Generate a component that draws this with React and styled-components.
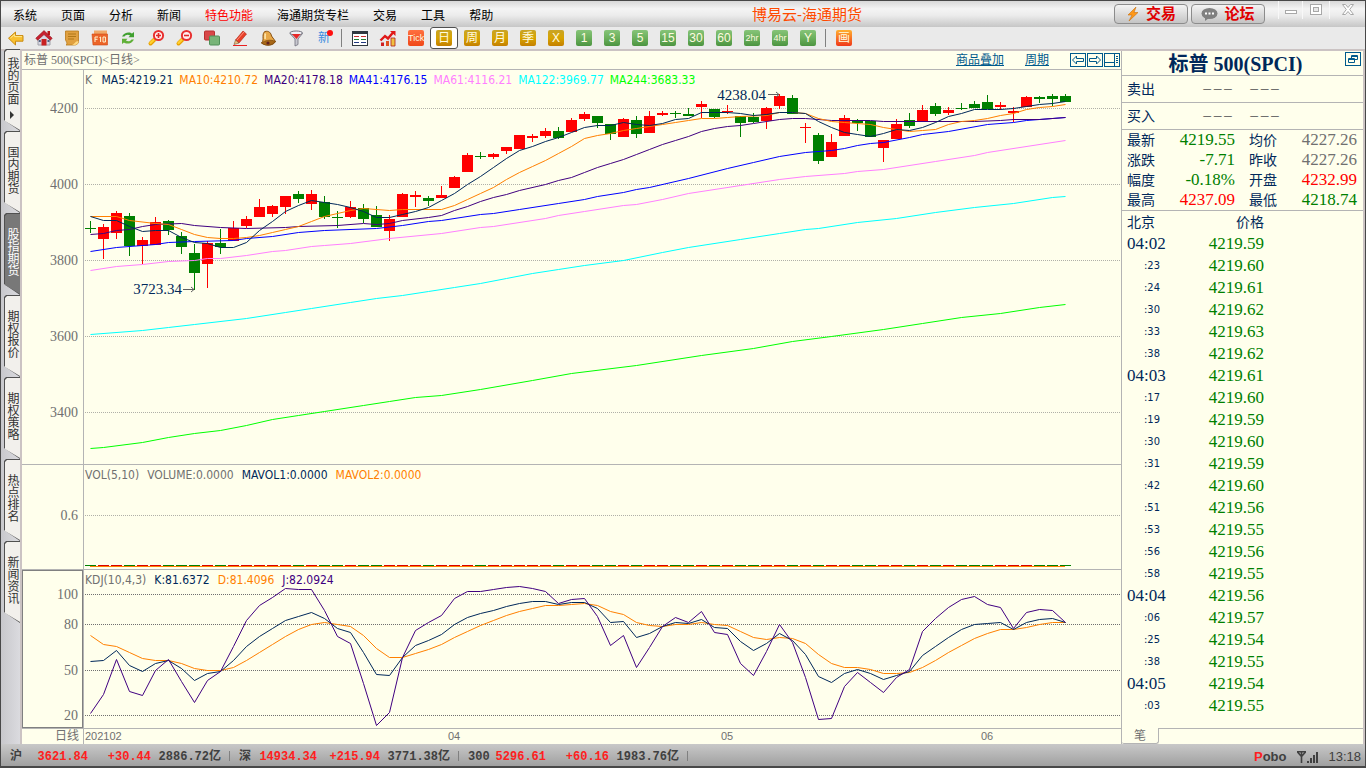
import React from 'react';
import styled, { createGlobalStyle } from 'styled-components';

const SERIF = '"Liberation Serif", "Noto Sans CJK SC", serif';
const SANS = '"DejaVu Sans Condensed", "Noto Sans CJK SC", sans-serif';
const ARIAL = '"Liberation Sans", "Noto Sans CJK SC", sans-serif';
const MONO = '"Liberation Mono", "Noto Sans CJK SC", monospace';

const NAVY = '#00285a';
const GREEN = '#008000';
const RED = '#ff0000';
const ORANGE = '#ff8000';
const PURPLE = '#400080';
const GRAY = '#707070';
const LINE = '#b4b4b4';

const GlobalStyle = createGlobalStyle`
  * {
    box-sizing: border-box;
  }

  body {
    margin: 0;
    background: #ffffec;
    font-family: ${SERIF};
    font-size: 12px;
  }

  button {
    margin: 0;
    padding: 0;
    border: 0;
    background: none;
    font: inherit;
    color: inherit;
    cursor: pointer;
  }

  svg {
    display: block;
    flex: none;
  }
`;

/* ---------- frame ---------- */

const Window = styled.div`
  display: flex;
  flex-direction: column;
  min-height: 100vh;
  border: 1px solid #484848;
  border-bottom-width: 2px;
`;

const MenuBar = styled.header`
  display: flex;
  height: 26px;
  background: linear-gradient(#d8d8d8, #f4f4f4 30%, #ececec 55%, #c6c6c6);
`;

const Menu = styled.nav`
  display: flex;
`;

const MenuItem = styled.button`
  padding: 0 12px;
  font-family: ${ARIAL};
  color: ${(p) => (p.$hot ? RED : '#000')};
  white-space: nowrap;
`;

const AppTitle = styled.h1`
  flex: 1;
  margin: 0;
  padding-right: 5px;
  font: 15px/28px ${ARIAL};
  color: #ff4a00;
  text-align: center;
  white-space: nowrap;
`;

const TitleButtons = styled.div`
  display: flex;
  gap: 3px;
  padding: 3px 13px 0 0;
`;

const TitleButton = styled.button`
  display: flex;
  align-items: center;
  justify-content: center;
  gap: 6px;
  width: 74px;
  height: 20px;
  border: 1px solid #8c8c8c;
  border-radius: 4px;
  background: linear-gradient(#f4f4f4, #dcdcdc 50%, #c4c4c4);
  font: bold 15px/18px ${ARIAL};
  color: #e00000;
`;

const WindowButton = styled.button`
  display: flex;
  justify-content: center;
  width: ${(p) => p.$w}px;
  height: 18px;
  padding-top: 3px;
  border-left: 1px solid #f8f8f8;
`;

const Toolbar = styled.div`
  display: flex;
  height: 24px;
  padding: 0 1px;
  border-bottom: 2px solid #cbc3c3;
  background: #eaeaea;
`;

const Tool = styled.button`
  display: flex;
  align-items: center;
  justify-content: center;
  width: 28px;
  height: 22px;
  border: 1px solid ${(p) => (p.$active ? '#505050' : 'transparent')};
  border-radius: 3px;
  background: ${(p) => (p.$active ? '#fff' : 'none')};
`;

const ToolDivider = styled.span`
  width: 1px;
  height: 18px;
  margin: 2px 4px 2px 3px;
  background: #808080;
`;

const tileFills = {
  gold: 'linear-gradient(#c8a428, #d8a400 50%, #c48000)',
  green: 'linear-gradient(#86c478, #6cb05c 50%, #4c9440)',
  red: 'linear-gradient(#ff7040, #f04818)',
  orange: 'linear-gradient(#ffb030, #f03818)',
};

const Tile = styled.span`
  width: 16px;
  height: 16px;
  border-radius: 2px;
  background: ${(p) => tileFills[p.$tone]};
  font: ${(p) => (p.$small ? 9 : 12)}px/16px ${ARIAL};
  color: #fffbe0;
  text-align: center;
`;

const NewBadge = styled.span`
  position: relative;
  font: 12px/16px ${ARIAL};
  color: #3c8ce0;

  &::after {
    content: '';
    position: absolute;
    top: 0;
    right: -3px;
    width: 6px;
    height: 6px;
    border-radius: 3px;
    background: #ff1010;
  }
`;

const Body = styled.div`
  display: flex;
  flex: 1;
  background: linear-gradient(90deg, #c8c8cc, #dcdce0 20px);
`;

/* ---------- side tabs ---------- */

const SideTabs = styled.nav`
  width: 19px;
  padding-left: 3px;
  /* the first tab starts level with the toolbar's rule */
  margin-top: -2px;
`;

const SideTab = styled.button`
  position: relative;
  z-index: 0;
  display: flex;
  flex-direction: column;
  align-items: center;
  justify-content: center;
  gap: 6px;
  width: 16px;
  height: 82px;
  padding-bottom: 4px;
  color: ${(p) => (p.$active ? '#fff' : '#333')};

  &::before,
  &::after {
    content: '';
    position: absolute;
    z-index: -1;
    inset: 0;
    clip-path: polygon(0 2px, 2px 0, 100% 0, 100% 100%, 0 71px);
    background: #505050;
  }

  &::after {
    inset: 1px 0 1px 1px;
    background: ${(p) => (p.$active ? '#787878' : '#f2f0ec')};
  }
`;

const SideLabel = styled.span`
  writing-mode: vertical-rl;
  font: 12px/14px ${ARIAL};
`;

/* ---------- chart ---------- */

const Panel = styled.main`
  display: flex;
  flex: 1;
  min-width: 0;
  border: 2px solid #cbc3c3;
  border-width: 0 2px;
  background: #ffffec;
`;

const ChartSide = styled.section`
  flex: 1;
  min-width: 0;
`;

const ChartHeader = styled.div`
  display: flex;
  align-items: center;
  height: 19px;
  padding: 0 1px 0 2px;
  border-bottom: 1px solid ${LINE};
  color: ${GRAY};
`;

const ChartName = styled.h2`
  flex: 1;
  margin: 0;
  font: 12px/18px ${SERIF};
`;

const HeaderLink = styled.a`
  margin-right: 21px;
  font: 12px/18px ${ARIAL};
  color: #005a8c;
`;

const IconRow = styled.div`
  display: flex;
  gap: 1px;
`;

const Pane = styled.div`
  display: grid;
  grid-template-columns: 61px minmax(0, 1fr);
  border-bottom: 1px solid ${LINE};
`;

const Axis = styled.div`
  outline: ${(p) => (p.$selected ? '1px solid #808080' : 'none')};
  outline-offset: -1px;
`;

const Plot = styled.div`
  position: relative;
  border-left: 1px solid ${LINE};
`;

const Legend = styled.div`
  position: absolute;
  top: 2px;
  left: 1px;
  display: flex;
  gap: ${(p) => p.$gap}px;
  font: 12px/16px ${SANS};
  white-space: nowrap;
`;

const LegendItem = styled.span`
  color: ${(p) => p.$color};
`;

const TimeAxis = styled.div`
  display: grid;
  grid-template-columns: 62px 363px 273px 260px 1fr;
  height: 15px;
  font: 11px/15px ${ARIAL};
  color: ${GRAY};
`;

const TimeLabel = styled.span`
  padding: ${(p) => (p.$first ? '0 4px 0 0' : '0 0 0 1px')};
  border-right: ${(p) => (p.$first ? `1px solid ${LINE}` : 'none')};
  font-size: ${(p) => (p.$first ? 12 : 11)}px;
  text-align: ${(p) => (p.$first ? 'right' : 'left')};
`;

/* ---------- quote panel ---------- */

const QuoteSide = styled.aside`
  display: flex;
  flex-direction: column;
  width: 242px;
  border-left: 1px solid ${LINE};
`;

const QuoteTitle = styled.div`
  display: flex;
  justify-content: center;
  position: relative;
  height: 25px;
  border-bottom: 1px solid ${LINE};
`;

const QuoteName = styled.h2`
  margin: 0 14px 0 0;
  font: bold 20px/26px ${SERIF};
  color: ${NAVY};
`;

const PopOut = styled.button`
  position: absolute;
  top: 1px;
  right: 2px;
`;

const BidRow = styled.div`
  display: flex;
  gap: 14px;
  height: 27px;
  padding-left: 5px;
  border-bottom: 1px solid ${LINE};
  font: 14px/26px ${ARIAL};
  color: ${NAVY};
`;

const BidLabel = styled.span`
  width: 61px;
`;

const Dashes = styled.span`
  width: 33px;
  font: 300 16px/30px Roboto, sans-serif;
  color: #606060;
`;

const StatTable = styled.table`
  width: 100%;
  border-collapse: separate;
  border-spacing: 0;
  border-bottom: 1px solid ${LINE};
  table-layout: fixed;
`;

const StatLabel = styled.th`
  width: ${(p) => p.$w}px;
  height: 20px;
  padding: 0 0 0 ${(p) => p.$pad}px;
  font: 14px/20px ${ARIAL};
  color: ${NAVY};
  text-align: left;
`;

const StatValue = styled.td`
  width: ${(p) => p.$w}px;
  padding: 0 ${(p) => p.$pad}px 0 0;
  font: 17px/20px ${SERIF};
  color: ${(p) => p.$color};
  text-align: right;
`;

const TickTable = styled.table`
  width: 142px;
  border-collapse: collapse;
  color: ${NAVY};
`;

const TickHead = styled.th`
  height: 22px;
  padding: 0 0 0 5px;
  font: 14px/22px ${ARIAL};
  text-align: ${(p) => p.$align};
`;

const TickTime = styled.td`
  height: 22px;
  padding: 0 0 0 ${(p) => (p.$minor ? 22 : 5)}px;
  font: ${(p) => (p.$minor ? `11px/22px ${SANS}` : `17px/22px ${SERIF}`)};
`;

const TickPrice = styled.td`
  padding: 0;
  font: 17px/22px ${SERIF};
  color: ${GREEN};
  text-align: right;
`;

const QuoteTabs = styled.div`
  display: flex;
  height: 16px;
  margin-top: auto;
`;

const QuoteTab = styled.button`
  width: 37px;
  border-bottom: 1px solid ${LINE};
  border-right: 1px solid ${LINE};
  border-radius: 0 0 3px 2px;
  font: 12px/14px ${ARIAL};
  color: ${GRAY};
`;

const QuoteTabsRest = styled.span`
  flex: 1;
  border-top: 1px solid ${LINE};
`;

/* ---------- status bar ---------- */

const StatusBar = styled.footer`
  display: flex;
  align-items: center;
  height: 22px;
  padding: 4px 4px 0 9px;
  background: linear-gradient(#c8c8c8, #a0a0a0);
  font: bold 12px/18px ${MONO};
  color: #404040;
`;

const IndexGroup = styled.div`
  display: grid;
  grid-template-columns: 18px 60px 63px 70px 18px;
  white-space: nowrap;
`;

const IndexCell = styled.span`
  color: ${(p) => (p.$up ? '#ff2020' : 'inherit')};
  text-align: ${(p) => (p.$left ? 'left' : 'right')};
`;

const StatusRule = styled.span`
  width: 1px;
  height: 10px;
  margin: 3px 8px;
  background: #808080;
`;

const StatusRight = styled.div`
  display: flex;
  align-items: center;
  gap: 10px;
  margin-left: auto;
  font: 13px/18px ${ARIAL};
`;

const Brand = styled.b`
  &::first-letter {
    color: #ff2020;
  }
`;

/* ---------- data ---------- */

// [rising, body top, body bottom, high, low], as y in window pixels
const candles = [
  [0, 228, 229, 221, 233], [1, 227, 239, 224, 259], [1, 213, 233, 211, 239], [0, 216, 246, 213, 256],
  [1, 240, 246, 237, 264], [1, 222, 245, 217, 245], [0, 221, 230, 220, 235], [0, 236, 247, 232, 254],
  [0, 253, 273, 244, 290], [1, 243, 264, 241, 288], [0, 243, 247, 229, 254], [1, 228, 241, 221, 241],
  [1, 219, 226, 216, 228], [1, 207, 217, 199, 217], [1, 206, 214, 205, 217], [1, 196, 207, 196, 214],
  [0, 194, 199, 191, 203], [1, 194, 204, 190, 210], [0, 202, 217, 196, 219], [0, 217, 218, 211, 228],
  [1, 207, 217, 201, 218], [0, 208, 219, 204, 223], [0, 215, 227, 206, 227], [1, 219, 231, 215, 241],
  [1, 194, 217, 193, 217], [1, 195, 197, 191, 207], [0, 198, 201, 196, 206], [1, 195, 198, 186, 198],
  [1, 177, 188, 176, 188], [1, 155, 172, 153, 172], [0, 156, 157, 152, 159], [1, 154, 157, 153, 159],
  [1, 147, 151, 147, 154], [1, 135, 149, 135, 149], [1, 136, 138, 134, 142], [1, 131, 136, 128, 138],
  [0, 131, 138, 127, 139], [1, 120, 132, 118, 132], [1, 114, 119, 112, 121], [0, 116, 123, 116, 128],
  [0, 124, 134, 124, 140], [1, 119, 137, 118, 137], [0, 120, 134, 116, 138], [1, 116, 133, 111, 133],
  [1, 113, 115, 111, 116], [0, 113, 114, 111, 118], [0, 114, 116, 108, 116], [1, 104, 107, 101, 118],
  [0, 109, 117, 109, 118], [1, 111, 112, 105, 114], [0, 116, 123, 116, 137], [0, 117, 122, 113, 123],
  [1, 108, 121, 107, 129], [1, 96, 106, 94, 109], [0, 98, 114, 95, 114], [1, 127, 128, 123, 143],
  [0, 135, 161, 133, 164], [1, 142, 157, 134, 157], [1, 118, 136, 115, 136], [0, 121, 123, 119, 131],
  [0, 121, 137, 121, 137], [1, 140, 148, 140, 162], [1, 124, 139, 119, 139], [0, 120, 126, 113, 128],
  [1, 110, 122, 105, 122], [0, 106, 114, 103, 116], [1, 110, 113, 107, 115], [0, 108, 109, 103, 110],
  [0, 104, 108, 101, 108], [0, 102, 109, 95, 109], [1, 105, 107, 102, 110], [1, 111, 113, 107, 122],
  [1, 97, 107, 96, 107], [0, 97, 99, 96, 103], [0, 96, 99, 94, 106], [0, 96, 102, 94, 102],
];

// one y for each candle
const every = (ys) => ys.map((y, i) => [i, y]);

const averages = [
  {
    color: '#00ff00',
    points: [[0, 448], [1, 447], [4, 442], [6, 437], [8, 433], [10, 430], [12, 425], [14, 419], [16, 415], [18, 411], [21, 405], [23, 401], [25, 397], [27, 395], [30, 389], [34, 380], [37, 373], [42, 365], [47, 355], [51, 348], [54, 341], [57, 336], [61, 329], [64, 323], [67, 317], [70, 313], [73, 307], [75, 304]],
  },
  {
    color: '#00ffff',
    points: [[0, 334], [4, 330], [6, 327], [8, 324], [12, 318], [15, 312], [17, 308], [20, 302], [22, 298], [24, 295], [26, 291], [28, 287], [30, 283], [32, 278], [34, 273], [36, 269], [38, 265], [41, 260], [44, 252], [46, 247], [50, 239], [53, 233], [55, 229], [56, 228], [59, 222], [62, 218], [65, 212], [68, 207], [71, 203], [74, 197], [75, 196]],
  },
  {
    color: '#ff80ff',
    points: [[0, 270], [2, 266], [4, 264], [6, 261], [8, 260], [9, 258], [10, 258], [12, 255], [14, 251], [15, 250], [17, 246], [18, 245], [20, 243], [23, 238], [27, 233], [30, 227], [31, 226], [35, 218], [36, 215], [38, 211], [41, 205], [42, 204], [44, 199], [46, 193], [50, 185], [53, 179], [55, 176], [58, 173], [59, 171], [61, 169], [65, 161], [68, 155], [69, 152], [75, 140]],
  },
  {
    color: '#0000ff',
    points: [[0, 251], [2, 247], [5, 244], [6, 242], [8, 241], [11, 240], [12, 238], [14, 236], [16, 232], [18, 230], [22, 228], [24, 225], [26, 221], [27, 220], [30, 214], [31, 213], [33, 209], [36, 203], [38, 199], [39, 196], [41, 192], [42, 189], [43, 187], [46, 178], [49, 168], [51, 162], [53, 156], [55, 152], [57, 150], [58, 148], [59, 145], [60, 143], [61, 142], [63, 137], [64, 134], [66, 131], [69, 124], [71, 122], [72, 120], [75, 117]],
  },
  {
    color: PURPLE,
    points: [[0, 234], [1, 233], [2, 230], [3, 229], [4, 226], [5, 224], [7, 223], [8, 225], [10, 227], [12, 228], [15, 227], [16, 226], [19, 225], [21, 223], [22, 224], [23, 223], [24, 220], [26, 217], [27, 215], [28, 210], [29, 206], [30, 201], [31, 197], [32, 194], [33, 190], [35, 184], [36, 180], [37, 177], [38, 172], [39, 167], [40, 163], [41, 159], [42, 154], [43, 149], [44, 144], [45, 140], [46, 136], [47, 131], [48, 128], [49, 126], [50, 125], [51, 123], [52, 121], [53, 119], [54, 118], [55, 118], [57, 120], [60, 120], [61, 121], [68, 121], [70, 120], [71, 119], [73, 119], [75, 117]],
  },
  {
    color: ORANGE,
    points: [[0, 216], [2, 216], [3, 220], [5, 223], [6, 224], [7, 229], [8, 234], [9, 237], [10, 238], [11, 238], [12, 237], [13, 235], [14, 232], [15, 229], [16, 226], [17, 221], [18, 216], [19, 213], [20, 210], [21, 208], [23, 210], [24, 209], [27, 209], [28, 205], [29, 199], [30, 193], [31, 187], [32, 179], [33, 172], [34, 166], [35, 160], [36, 153], [37, 146], [38, 138], [39, 135], [40, 133], [41, 130], [42, 128], [43, 126], [44, 124], [45, 122], [46, 120], [47, 118], [48, 118], [49, 117], [50, 116], [52, 115], [53, 112], [54, 112], [55, 113], [56, 118], [57, 121], [58, 122], [59, 123], [60, 124], [61, 127], [62, 129], [63, 131], [64, 130], [65, 129], [66, 124], [67, 121], [68, 120], [69, 118], [70, 115], [71, 113], [72, 109], [73, 107], [74, 106], [75, 104]],
  },
  {
    color: NAVY,
    points: every([216, 220, 220, 226, 231, 230, 230, 237, 242, 243, 247, 247, 242, 230, 221, 211, 205, 200, 202, 204, 207, 211, 217, 217, 214, 211, 207, 200, 193, 184, 176, 167, 158, 150, 146, 141, 137, 132, 127, 125, 125, 122, 124, 125, 123, 119, 118, 112, 112, 112, 113, 115, 114, 112, 112, 113, 121, 127, 132, 134, 136, 133, 129, 130, 127, 122, 116, 113, 109, 109, 109, 108, 106, 104, 103, 101]),
  },
];

const kdj = [
  {
    color: ORANGE,
    points: every([635, 644, 646, 652, 658, 660, 660, 663, 668, 670, 670, 667, 660, 652, 644, 636, 629, 624, 622, 624, 626, 635, 648, 657, 657, 653, 649, 644, 637, 631, 625, 620, 615, 611, 608, 605, 605, 604, 603, 605, 611, 614, 622, 625, 626, 624, 624, 622, 624, 625, 631, 637, 639, 637, 638, 643, 654, 663, 667, 667, 669, 673, 673, 672, 667, 660, 652, 645, 638, 633, 629, 629, 627, 624, 622, 622]),
  },
  {
    color: NAVY,
    points: every([661, 660, 650, 665, 671, 663, 660, 668, 680, 673, 671, 660, 646, 636, 628, 620, 616, 612, 618, 628, 632, 652, 674, 675, 657, 645, 640, 634, 624, 617, 613, 610, 606, 603, 601, 601, 604, 602, 602, 608, 622, 621, 637, 633, 626, 622, 623, 619, 627, 628, 641, 650, 643, 633, 640, 654, 676, 682, 673, 669, 673, 679, 675, 671, 655, 646, 637, 629, 624, 623, 622, 629, 622, 619, 618, 622]),
  },
  {
    color: PURPLE,
    points: every([713, 694, 659, 691, 695, 670, 659, 681, 702, 680, 671, 646, 620, 605, 597, 588, 589, 589, 610, 636, 643, 683, 725, 712, 657, 630, 622, 615, 598, 591, 591, 589, 587, 586, 588, 591, 603, 599, 598, 616, 645, 635, 667, 647, 626, 617, 622, 611, 632, 634, 663, 675, 651, 624, 642, 677, 719, 718, 686, 672, 682, 692, 677, 669, 631, 618, 607, 599, 596, 604, 607, 628, 612, 609, 610, 622]),
  },
];

const stats = [
  ['最新', '4219.55', GREEN, '均价', '4227.26', GRAY],
  ['涨跌', '-7.71', GREEN, '昨收', '4227.26', GRAY],
  ['幅度', '-0.18%', GREEN, '开盘', '4232.99', RED],
  ['最高', '4237.09', RED, '最低', '4218.74', GREEN],
];

const ticks = [
  ['04:02', '4219.59'], [':23', '4219.60'], [':24', '4219.61'], [':30', '4219.62'],
  [':33', '4219.63'], [':38', '4219.62'], ['04:03', '4219.61'], [':17', '4219.60'],
  [':19', '4219.59'], [':30', '4219.60'], [':31', '4219.59'], [':42', '4219.60'],
  [':51', '4219.56'], [':53', '4219.55'], [':56', '4219.56'], [':58', '4219.55'],
  ['04:04', '4219.56'], [':06', '4219.57'], [':25', '4219.54'], [':38', '4219.55'],
  ['04:05', '4219.54'], [':03', '4219.55'],
];

const indices = [
  ['沪', '3621.84', '+30.44', '2886.72亿'],
  ['深', '14934.34', '+215.94', '3771.38亿'],
  ['300', '5296.61', '+60.16', '1983.76亿'],
];

const menu = ['系统', '页面', '分析', '新闻', '特色功能', '海通期货专栏', '交易', '工具', '帮助'];
const sideTabs = ['我的页面', '国内期货', '股指期货', '期权报价', '期权策略', '热点排名', '新闻资讯'];

const periods = [
  ['Tick', 'red', true], ['日', 'gold'], ['周', 'gold'], ['月', 'gold'], ['季', 'gold'], ['X', 'gold'],
  ['1', 'green'], ['3', 'green'], ['5', 'green'], ['15', 'green'], ['30', 'green'], ['60', 'green'],
  ['2hr', 'green', true], ['4hr', 'green', true], ['Y', 'green'],
];

/* ---------- icons ---------- */

const Icon = ({ children, w = 18, h = 18 }) => (
  <svg width={w} height={h} viewBox={`0 0 ${w} ${h}`} fill="none" aria-hidden="true">
    {children}
  </svg>
);

const Magnifier = ({ plus }) => (
  <Icon>
    <path d="M7 11 3.500 14.500" stroke="#e8a000" strokeWidth="4" strokeLinecap="round" />
    <path d="M6.500 11 3.500 14" stroke="#ffd030" strokeWidth="2.4" strokeLinecap="round" />
    <circle cx="11.5" cy="6.500" r="4.600" fill="#fff0f0" stroke="#e83030" strokeWidth="2" />
    <path d={plus ? 'M9 6.500h5M11.500 4v5' : 'M9 6.500h5'} stroke="#e02828" strokeWidth="1.600" />
  </Icon>
);

const tools = [
  ['后退', (
    <Icon>
      <path d="M1.500 9.200 8.500 3v3.600H16v5.600H8.500V16z" fill="#f8c030" stroke="#c88a10" />
      <path d="M3.500 9 7.600 5.400v2.200H15" stroke="#ffe890" />
    </Icon>
  )],
  ['首页', (
    <Icon>
      <path d="M3 9v7h12V9L9 4z" fill="#d8d8e4" stroke="#a0a0a8" />
      <path d="M12.500 2H15v4h-2.500z" fill="#b81818" />
      <path d="M.8 9.200 9 1.600l8.200 7.600-1.800 2L9 5.600l-6.400 5.600z" fill="#c82030" stroke="#901018" strokeWidth=".6" />
      <path d="M6.500 10h5v6.500h-5z" fill="#c82020" />
      <path d="M12.500 11h2v2h-2zM3.800 11h2v2h-2z" fill="#506080" />
    </Icon>
  )],
  ['资讯', (
    <Icon>
      <path d="M2.500 2h13v10c0 3-2 4-4 4H3c2-1 0-4-.5-5z" fill="#e0a040" stroke="#b87818" strokeWidth=".8" />
      <path d="M5 5h8M5 7.500h8M5 10h6" stroke="#b07818" />
      <path d="M9 16c3-1 3-4 6.500-4-.5 3-2 4-4 4z" fill="#ffd880" />
    </Icon>
  )],
  ['F10', (
    <Icon>
      <path d="M3 1.500h13v5H3z" fill="#f0a868" />
      <path d="M1 5h15.500v11H2z" fill="#ec6428" stroke="#d04810" strokeWidth=".6" />
      <path d="M4 13V8h3M4 10.300h2.500M8.500 8.500 9.600 8v5M12 8h2.400v5H12z" stroke="#fff4d0" />
    </Icon>
  )],
  ['刷新', (
    <Icon>
      <path d="M3 7.500C5 3 11 2.500 13 4.500l2-1.500v5.200H9.500l1.600-1.700C9 5 6.500 5.800 5.500 7.500z" fill="#40a030" />
      <path d="M15 10.500C13 15 7 15.500 5 13.500L3 15V9.800h5.500l-1.600 1.700C9 13 11.500 12.200 12.500 10.500z" fill="#60b038" />
    </Icon>
  )],
  ['放大', <Magnifier plus />],
  ['缩小', <Magnifier />],
  ['叠加', (
    <Icon>
      <rect x="1.500" y="2" width="10" height="9" rx="1" fill="#d84848" stroke="#b83030" />
      <rect x="6.500" y="7" width="10" height="9" rx="1" fill="#78b478" stroke="#509058" />
    </Icon>
  )],
  ['画线', (
    <Icon>
      <path d="M2 16.500h14" stroke="#e82020" />
      <path d="M4.500 11 12 2l3.500 3L8 14z" fill="#e84028" stroke="#b02010" strokeWidth=".6" />
      <path d="M3 15.500 4.500 11 8 14z" fill="#f0c080" stroke="#604020" strokeWidth=".5" />
      <path d="M6 11 13 3" stroke="#ff9080" />
    </Icon>
  )],
  ['预警', (
    <Icon>
      <path d="M6 2.500c4-1 6 1.500 6.500 4.500l4 5.500c-2 4-9 5-14 1.500 2-2 1.500-4 1.500-6.500 0-2 .5-4.500 2-5z" fill="#e8a848" stroke="#885010" />
      <path d="M2.500 14c3-2.500 9-4 14-1.500-3 4-10 5-14 1.500z" fill="#a86818" stroke="#704008" strokeWidth=".6" />
      <path d="M6.500 4.500C5.500 6 6.500 8 6 10" stroke="#ffe8b0" strokeWidth="1.600" />
      <circle cx="9" cy="14" r="1.600" fill="#602020" />
    </Icon>
  )],
  ['筛选', (
    <Icon>
      <path d="M3 4.500 8 10v7l3-1.500V10l4.500-5.500z" fill="#c8c8d0" stroke="#70707c" strokeWidth=".8" />
      <ellipse cx="9.200" cy="4" rx="6.300" ry="2" fill="#f0f0f4" stroke="#70707c" />
      <path d="M5 5h8.500L9.500 10z" fill="#e82828" />
    </Icon>
  )],
  ['新', <NewBadge>新</NewBadge>],
];

const QuoteListIcon = () => (
  <Icon>
    <rect x="1.500" y="2.500" width="15" height="14" fill="#fff" stroke="#303840" />
    <path d="M1 4h16" stroke="#303840" strokeWidth="2" />
    <path d="M3 7.500h5M10 7.500h5" stroke="#c83030" />
    <path d="M3 10.500h5M10 10.500h5" stroke="#208030" />
    <path d="M3 13.500h5M10 13.500h5" stroke="#203880" />
  </Icon>
);

const TrendIcon = () => (
  <Icon>
    <path d="M2 13.500h3V17H2z" fill="#d02020" />
    <path d="M7 12h3v5H7z" fill="#e05020" />
    <path d="M12 9h4v8h-4z" fill="#f0c040" stroke="#b02020" strokeWidth=".8" />
    <path d="M1.500 11.500 6 7l3 2.500 5-6" stroke="#e01818" strokeWidth="2.400" />
    <path d="M11 2h5.500v5z" fill="#e01818" />
  </Icon>
);

const Bolt = () => (
  <Icon w={14} h={16}>
    <path d="M10 1 2 9h4l-3 6 9-8.500H8z" fill="#ff9818" stroke="#c87010" strokeWidth=".6" />
  </Icon>
);

const Bubble = () => (
  <Icon w={17} h={14}>
    <ellipse cx="8.500" cy="6.500" rx="8" ry="5.500" fill="#808080" />
    <path d="M4 10v4l4-3z" fill="#808080" />
    <path d="M4 6.500h2M7.500 6.500h2M11 6.500h2" stroke="#fff" strokeWidth="2" />
  </Icon>
);

const BoxIcon = ({ d }) => (
  <Icon w={16} h={14}>
    <rect x=".5" y=".5" width="15" height="13" stroke="#005a8c" />
    <path d={d} stroke="#005a8c" />
  </Icon>
);

/* ---------- chart pieces ---------- */

const cx = (i) => 6.5 + 13 * i;

const Grid = ({ ys, top, color }) =>
  ys.map((y) => (
    <line
      key={y}
      x1="1"
      x2="100%"
      y1={y - top + 0.5}
      y2={y - top + 0.5}
      stroke={color}
      strokeDasharray="1 1"
      shapeRendering="crispEdges"
    />
  ));

const Curves = ({ series }) =>
  series.map((s) => (
    <polyline
      key={s.color}
      points={s.points.map(([i, y]) => `${cx(i)},${y + 0.5}`).join(' ')}
      fill="none"
      stroke={s.color}
    />
  ));

const AxisLabels = ({ labels, top, height }) => (
  <svg width="61" height={height} fontFamily={SERIF} fontSize="14" fill={GRAY} textAnchor="end">
    {labels.map(([text, y]) => (
      <text key={text} x="56" y={y - top + 5}>
        {text}
      </text>
    ))}
  </svg>
);

const PricePane = () => {
  const top = 70;
  const height = 394;
  const rows = [['4200', 108], ['4000', 184], ['3800', 260], ['3600', 336], ['3400', 412]];
  return (
    <Pane>
      <Axis>
        <AxisLabels labels={rows} top={top} height={height} />
      </Axis>
      <Plot>
        <svg width="100%" height={height}>
          <Grid ys={rows.map((r) => r[1])} top={top} color="#b0b0a8" />
          <g transform={`translate(0 ${-top})`}>
            <g shapeRendering="crispEdges">
              {candles.map(([up, a, b, high, low], i) => (
                <g key={i} fill={up ? RED : GREEN}>
                  <rect x={1 + 13 * i} y={a} width="11" height={b - a} />
                  <rect x={6 + 13 * i} y={high} width="1" height={low - high} />
                </g>
              ))}
            </g>
            <Curves series={averages} />
            <g fontFamily={SERIF} fontSize="15" fill={NAVY} textAnchor="end">
              <text x="682" y="100">4238.04</text>
              <text x="98" y="294">3723.34</text>
            </g>
            <path d="M684 94.500h11M692 92l3 2.500-3 2.500M99 289.500h11M107 287l3 2.500-3 2.500" stroke="#606060" fill="none" />
          </g>
        </svg>
        <Legend $gap={6}>
          <LegendItem $color={GRAY}>K&nbsp;</LegendItem>
          <LegendItem $color={NAVY}>MA5:4219.21</LegendItem>
          <LegendItem $color={ORANGE}>MA10:4210.72</LegendItem>
          <LegendItem $color={PURPLE}>MA20:4178.18</LegendItem>
          <LegendItem $color="#0000ff">MA41:4176.15</LegendItem>
          <LegendItem $color="#ff80ff">MA61:4116.21</LegendItem>
          <LegendItem $color="#00ffff">MA122:3969.77</LegendItem>
          <LegendItem $color="#00ff00">MA244:3683.33</LegendItem>
        </Legend>
      </Plot>
    </Pane>
  );
};

const VolumePane = () => (
  <Pane>
    <Axis>
      <AxisLabels labels={[['0.6', 515]]} top={465} height={104} />
    </Axis>
    <Plot>
      <svg width="100%" height="104" shapeRendering="crispEdges">
        <Grid ys={[515]} top={465} color="#b0b0a8" />
        {candles.map(([up], i) => (
          <rect key={i} x={1 + 13 * i} y="100" width="11" height="1" fill={up ? '#d80000' : GREEN} />
        ))}
        <rect x="6" y="101" width="975" height="1" fill={ORANGE} />
      </svg>
      <Legend $gap={8}>
        <LegendItem $color={GRAY}>VOL(5,10)</LegendItem>
        <LegendItem $color={GRAY}>VOLUME:0.0000</LegendItem>
        <LegendItem $color={NAVY}>MAVOL1:0.0000</LegendItem>
        <LegendItem $color={ORANGE}>MAVOL2:0.0000</LegendItem>
      </Legend>
    </Plot>
  </Pane>
);

const KdjPane = () => (
  <Pane>
    <Axis $selected>
      <AxisLabels
        labels={[['100', 594], ['80', 624], ['50', 670], ['20', 715]]}
        top={570}
        height={158}
      />
    </Axis>
    <Plot>
      <svg width="100%" height="158">
        <Grid ys={[594, 624, 670, 715]} top={570} color="#707070" />
        <g transform="translate(0 -570)">
          <Curves series={kdj} />
        </g>
      </svg>
      <Legend $gap={8}>
        <LegendItem $color={GRAY}>KDJ(10,4,3)</LegendItem>
        <LegendItem $color={NAVY}>K:81.6372</LegendItem>
        <LegendItem $color={ORANGE}>D:81.4096</LegendItem>
        <LegendItem $color={PURPLE}>J:82.0924</LegendItem>
      </Legend>
    </Plot>
  </Pane>
);

const Quotes = () => (
  <QuoteSide>
    <QuoteTitle>
      <QuoteName>标普 500(SPCI)</QuoteName>
      <PopOut aria-label="弹出">
        <BoxIcon d="M6.500 6V3.500h6v4H10M6 4.500h7M3.500 6.500h6v4h-6zM3 7.500h7" />
      </PopOut>
    </QuoteTitle>
    {['卖出', '买入'].map((label) => (
      <BidRow key={label}>
        <BidLabel>{label}</BidLabel>
        <Dashes>–––</Dashes>
        <Dashes>–––</Dashes>
      </BidRow>
    ))}
    <StatTable>
      <tbody>
        {stats.map(([a, av, ac, b, bv, bc]) => (
          <tr key={a}>
            <StatLabel scope="row" $w={45} $pad={5}>{a}</StatLabel>
            <StatValue $w={68} $color={ac} $pad={0}>{av}</StatValue>
            <StatLabel scope="row" $w={50} $pad={14}>{b}</StatLabel>
            <StatValue $w={78} $color={bc} $pad={6}>{bv}</StatValue>
          </tr>
        ))}
      </tbody>
    </StatTable>
    <TickTable>
      <thead>
        <tr>
          <TickHead $align="left">北京</TickHead>
          <TickHead $align="right">价格</TickHead>
        </tr>
      </thead>
      <tbody>
        {ticks.map(([time, price], i) => (
          <tr key={i}>
            <TickTime $minor={time[0] === ':'}>{time}</TickTime>
            <TickPrice>{price}</TickPrice>
          </tr>
        ))}
      </tbody>
    </TickTable>
    <QuoteTabs>
      <QuoteTab>笔</QuoteTab>
      <QuoteTabsRest />
    </QuoteTabs>
  </QuoteSide>
);

const App = () => {
  return (
    <Window>
      <GlobalStyle />
      <MenuBar>
        <Menu>
          {menu.map((m) => (
            <MenuItem key={m} $hot={m === '特色功能'}>{m}</MenuItem>
          ))}
        </Menu>
        <AppTitle>博易云-海通期货</AppTitle>
        <TitleButtons>
          <TitleButton><Bolt />交易</TitleButton>
          <TitleButton><Bubble />论坛</TitleButton>
        </TitleButtons>
        <WindowButton $w={24} aria-label="最小化">
          <Icon w={14} h={12}>
            <rect x="1.500" y="6.500" width="11" height="3" fill="#fff" stroke="#a8a8a8" />
          </Icon>
        </WindowButton>
        <WindowButton $w={27} aria-label="最大化">
          <Icon w={14} h={12}>
            <rect x="1.500" y=".5" width="11" height="10" fill="#fff" stroke="#a8a8a8" />
            <rect x="4.500" y="3.500" width="5" height="4" fill="#e8e8e8" stroke="#a8a8a8" />
          </Icon>
        </WindowButton>
        <WindowButton $w={36} aria-label="关闭">
          <Icon w={14} h={12}>
            <path d="M1.500.5h3L7 3.500l2.500-3h3L8.700 5.500l3.800 5h-3L7 7.500l-2.500 3h-3l3.800-5z" fill="#fff" stroke="#a8a8a8" />
          </Icon>
        </WindowButton>
      </MenuBar>

      <Toolbar>
        {tools.map(([name, icon]) => (
          <Tool key={name} aria-label={name}>{icon}</Tool>
        ))}
        <ToolDivider />
        <Tool aria-label="报价"><QuoteListIcon /></Tool>
        <Tool aria-label="走势"><TrendIcon /></Tool>
        {periods.map(([name, tone, small]) => (
          <Tool key={name} $active={name === '日'}>
            <Tile $tone={tone} $small={small}>{name}</Tile>
          </Tool>
        ))}
        <ToolDivider />
        <Tool><Tile $tone="orange">画</Tile></Tool>
      </Toolbar>

      <Body>
        <SideTabs>
          {sideTabs.map((t, i) => (
            <SideTab key={t} $active={i === 2}>
              <SideLabel>{t}</SideLabel>
              {i === 0 && (
                <Icon w={4} h={8}>
                  <path d="M0 0v8l4-4z" fill="#333" />
                </Icon>
              )}
            </SideTab>
          ))}
        </SideTabs>
        <Panel>
          <ChartSide>
            <ChartHeader>
              <ChartName>标普 500(SPCI)&lt;日线&gt;</ChartName>
              <HeaderLink href="#overlay">商品叠加</HeaderLink>
              <HeaderLink href="#period">周期</HeaderLink>
              <IconRow>
                <button aria-label="向左"><BoxIcon d="M2.500 7 6.500 3v2.500h7v3h-7V11z" /></button>
                <button aria-label="向右"><BoxIcon d="M13.500 7 9.500 3v2.500h-7v3h7V11z" /></button>
                <button aria-label="侧栏"><BoxIcon d="M10.500 1v12M1 9.500h9M12 3.500h2M12 5.500h2M12 7.500h2M12 9.500h2" /></button>
              </IconRow>
            </ChartHeader>
            <PricePane />
            <VolumePane />
            <KdjPane />
            <TimeAxis>
              <TimeLabel $first>日线</TimeLabel>
              <TimeLabel>202102</TimeLabel>
              <TimeLabel>04</TimeLabel>
              <TimeLabel>05</TimeLabel>
              <TimeLabel>06</TimeLabel>
            </TimeAxis>
          </ChartSide>
          <Quotes />
        </Panel>
      </Body>

      <StatusBar>
        {indices.map(([name, price, change, volume]) => (
          <IndexGroup key={name}>
            <IndexCell $left>{name}</IndexCell>
            <IndexCell $up>{price}</IndexCell>
            <IndexCell $up>{change}</IndexCell>
            <IndexCell>{volume}</IndexCell>
            <StatusRule />
          </IndexGroup>
        ))}
        <StatusRight>
          <Brand>Pobo</Brand>
          <Icon w={22} h={12}>
            <path d="M1 .8h9M1.500 1l4 4.500L9.500 1M5.500 1v11" stroke="#404040" strokeWidth="1.600" />
            <path d="M11 10h2v2h-2zM14 7h2v5h-2zM17 4h2v8h-2zM20 1h2v11h-2z" fill="#404040" />
          </Icon>
          <span>13:18</span>
        </StatusRight>
      </StatusBar>
    </Window>
  );
};

export default App;
